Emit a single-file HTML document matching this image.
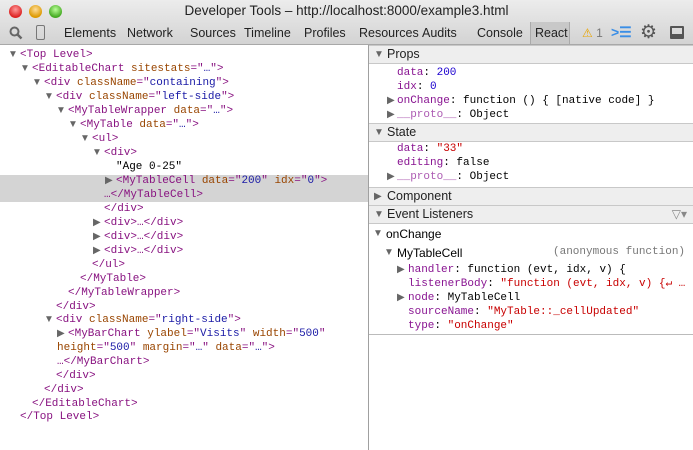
<!DOCTYPE html>
<html><head><meta charset="utf-8"><style>
*{margin:0;padding:0;box-sizing:border-box}
body{width:693px;height:450px;overflow:hidden;background:#fff;font-family:"Liberation Sans",sans-serif;position:relative}
#top{position:absolute;left:0;top:0;width:693px;height:45px;background:linear-gradient(#ececec,#d3d3d3);border-bottom:1px solid #a8a8a8}
.title{position:absolute;top:3px;left:0;width:693px;text-align:center;font-size:13.5px;color:#222}
.dot{position:absolute;top:5px;width:13px;height:13px;border-radius:50%}
.tabs{position:absolute;top:26px;font-size:12.5px;color:#222;white-space:nowrap}
.tabs span{position:absolute}
.m{font-family:"Liberation Mono",monospace;font-size:11px;white-space:pre;position:absolute;line-height:14px}
.t{color:#881280}.a{color:#994500}.v{color:#1a1aa6}.k{color:#881391}.r{color:#c80000}.s{color:#c41a16}.n{color:#1c00cf}
.ar{position:absolute;font-size:10px;color:#666;line-height:14px}
.hdr{position:absolute;left:369px;width:324px;height:19px;background:#eee;border-top:1px solid #c8c8c8;border-bottom:1px solid #c8c8c8;font-size:12.5px;color:#222;padding-left:18px;line-height:17px}
.hdr i{position:absolute;left:5px;font-style:normal;font-size:10px;color:#666}
</style></head><body>
<div id="top">
<div class="dot" style="left:9px;background:radial-gradient(circle at 50% 35%,#f99,#d22 70%)"></div>
<div class="dot" style="left:29px;background:radial-gradient(circle at 50% 35%,#fd9,#d90 70%)"></div>
<div class="dot" style="left:49px;background:radial-gradient(circle at 50% 35%,#bf9,#4a2 70%)"></div>
<div class="title">Developer Tools – http://localhost:8000/example3.html</div>
<svg style="position:absolute;left:9px;top:26px" width="14" height="14"><circle cx="5.5" cy="5.5" r="4" fill="none" stroke="#666" stroke-width="2"/><line x1="8.5" y1="8.5" x2="12.5" y2="12.5" stroke="#666" stroke-width="2.5"/></svg>
<div style="position:absolute;left:36px;top:25px;width:9px;height:15px;border:1px solid #777;border-radius:2px"></div>
<div class="tabs">
<span style="left:64px">Elements</span><span style="left:127px">Network</span><span style="left:190px">Sources</span><span style="left:244px">Timeline</span><span style="left:304px">Profiles</span><span style="left:359px">Resources</span><span style="left:422px">Audits</span><span style="left:477px">Console</span>
</div>
<div style="position:absolute;left:530px;top:22px;width:40px;height:22px;background:#c8c8c8;border-left:1px solid #aaa;border-right:1px solid #aaa"></div>
<div class="tabs"><span style="left:535px">React</span></div>
<div style="position:absolute;left:582px;top:26px;font-size:12px;color:#e9a400">⚠<span style="color:#777"> 1</span></div>
<div style="position:absolute;left:611px;top:24px;font-size:14px;color:#3a8ee6;font-weight:bold">&gt;☰</div>
<div style="position:absolute;left:640px;top:21px;font-size:19px;color:#555">⚙</div>
<div style="position:absolute;left:670px;top:26px;width:14px;height:13px;border:2px solid #555;border-bottom-width:5px;border-radius:1px"></div>
</div>

<div style="position:absolute;left:0;top:175px;width:368px;height:27px;background:#d4d4d4"></div>
<div style="position:absolute;left:368px;top:45px;width:1px;height:405px;background:#a0a0a0"></div>

<span class="ar" style="left:8px;top:48px">▼</span><span class="m" style="left:20px;top:48px"><span class="t">&lt;Top Level&gt;</span></span>
<span class="ar" style="left:20px;top:62px">▼</span><span class="m" style="left:32px;top:62px"><span class="t">&lt;EditableChart </span><span class="a">sitestats</span><span class="t">="</span><span class="v">…</span><span class="t">"&gt;</span></span>
<span class="ar" style="left:32px;top:76px">▼</span><span class="m" style="left:44px;top:76px"><span class="t">&lt;div </span><span class="a">className</span><span class="t">="</span><span class="v">containing</span><span class="t">"&gt;</span></span>
<span class="ar" style="left:44px;top:90px">▼</span><span class="m" style="left:56px;top:90px"><span class="t">&lt;div </span><span class="a">className</span><span class="t">="</span><span class="v">left-side</span><span class="t">"&gt;</span></span>
<span class="ar" style="left:56px;top:104px">▼</span><span class="m" style="left:68px;top:104px"><span class="t">&lt;MyTableWrapper </span><span class="a">data</span><span class="t">="</span><span class="v">…</span><span class="t">"&gt;</span></span>
<span class="ar" style="left:68px;top:118px">▼</span><span class="m" style="left:80px;top:118px"><span class="t">&lt;MyTable </span><span class="a">data</span><span class="t">="</span><span class="v">…</span><span class="t">"&gt;</span></span>
<span class="ar" style="left:80px;top:132px">▼</span><span class="m" style="left:92px;top:132px"><span class="t">&lt;ul&gt;</span></span>
<span class="ar" style="left:92px;top:146px">▼</span><span class="m" style="left:104px;top:146px"><span class="t">&lt;div&gt;</span></span>
<span class="m" style="left:116px;top:160px">"Age 0-25"</span>
<span class="ar" style="left:105px;top:174px">▶</span><span class="m" style="left:116px;top:174px"><span class="t">&lt;MyTableCell </span><span class="a">data</span><span class="t">="</span><span class="v">200</span><span class="t">" </span><span class="a">idx</span><span class="t">="</span><span class="v">0</span><span class="t">"&gt;</span></span>
<span class="m" style="left:104px;top:188px"><span class="t">…&lt;/MyTableCell&gt;</span></span>
<span class="m" style="left:104px;top:202px"><span class="t">&lt;/div&gt;</span></span>
<span class="ar" style="left:93px;top:216px">▶</span><span class="m" style="left:104px;top:216px"><span class="t">&lt;div&gt;…&lt;/div&gt;</span></span>
<span class="ar" style="left:93px;top:230px">▶</span><span class="m" style="left:104px;top:230px"><span class="t">&lt;div&gt;…&lt;/div&gt;</span></span>
<span class="ar" style="left:93px;top:244px">▶</span><span class="m" style="left:104px;top:244px"><span class="t">&lt;div&gt;…&lt;/div&gt;</span></span>
<span class="m" style="left:92px;top:258px"><span class="t">&lt;/ul&gt;</span></span>
<span class="m" style="left:80px;top:272px"><span class="t">&lt;/MyTable&gt;</span></span>
<span class="m" style="left:68px;top:286px"><span class="t">&lt;/MyTableWrapper&gt;</span></span>
<span class="m" style="left:56px;top:300px"><span class="t">&lt;/div&gt;</span></span>
<span class="ar" style="left:44px;top:313px">▼</span><span class="m" style="left:56px;top:313px"><span class="t">&lt;div </span><span class="a">className</span><span class="t">="</span><span class="v">right-side</span><span class="t">"&gt;</span></span>
<span class="ar" style="left:57px;top:327px">▶</span><span class="m" style="left:68px;top:327px"><span class="t">&lt;MyBarChart </span><span class="a">ylabel</span><span class="t">="</span><span class="v">Visits</span><span class="t">" </span><span class="a">width</span><span class="t">="</span><span class="v">500</span><span class="t">"</span></span>
<span class="m" style="left:57px;top:341px"><span class="a">height</span><span class="t">="</span><span class="v">500</span><span class="t">" </span><span class="a">margin</span><span class="t">="</span><span class="v">…</span><span class="t">" </span><span class="a">data</span><span class="t">="</span><span class="v">…</span><span class="t">"&gt;</span></span>
<span class="m" style="left:57px;top:355px"><span class="t">…&lt;/MyBarChart&gt;</span></span>
<span class="m" style="left:56px;top:369px"><span class="t">&lt;/div&gt;</span></span>
<span class="m" style="left:44px;top:383px"><span class="t">&lt;/div&gt;</span></span>
<span class="m" style="left:32px;top:397px"><span class="t">&lt;/EditableChart&gt;</span></span>
<span class="m" style="left:20px;top:410px"><span class="t">&lt;/Top Level&gt;</span></span>

<div class="hdr" style="top:45px"><i>▼</i>Props</div>
<span class="m" style="left:397px;top:66px"><span class="k">data</span>: <span class="n">200</span></span>
<span class="m" style="left:397px;top:80px"><span class="k">idx</span>: <span class="n">0</span></span>
<span class="ar" style="left:387px;top:94px">▶</span><span class="m" style="left:397px;top:94px"><span class="k">onChange</span>: function () { [native code] }</span>
<span class="ar" style="left:387px;top:108px">▶</span><span class="m" style="left:397px;top:108px"><span class="k" style="opacity:.7">__proto__</span>: Object</span>
<div class="hdr" style="top:123px"><i>▼</i>State</div>
<span class="m" style="left:397px;top:142px"><span class="k">data</span>: <span class="r">"33"</span></span>
<span class="m" style="left:397px;top:156px"><span class="k">editing</span>: false</span>
<span class="ar" style="left:387px;top:170px">▶</span><span class="m" style="left:397px;top:170px"><span class="k" style="opacity:.7">__proto__</span>: Object</span>
<div class="hdr" style="top:187px"><i>▶</i>Component</div>
<div class="hdr" style="top:205px"><i>▼</i>Event Listeners<span style="position:absolute;right:6px;top:0;color:#888;font-size:12px">▽▾</span></div>
<span class="ar" style="left:373px;top:227px">▼</span><span class="m" style="left:386px;top:227px;font-family:'Liberation Sans',sans-serif;font-size:12px">onChange</span>
<span class="ar" style="left:384px;top:246px">▼</span><span class="m" style="left:397px;top:246px;font-family:'Liberation Sans',sans-serif;font-size:12px">MyTableCell</span>
<span class="m" style="left:553px;top:245px;color:#777">(anonymous function)</span>
<span class="ar" style="left:397px;top:263px">▶</span><span class="m" style="left:408px;top:263px"><span class="k">handler</span>: function (evt, idx, v) {</span>
<span class="m" style="left:408px;top:277px"><span class="k">listenerBody</span>: <span class="r">"function (evt, idx, v) {↵ …</span></span>
<span class="ar" style="left:397px;top:291px">▶</span><span class="m" style="left:408px;top:291px"><span class="k">node</span>: MyTableCell</span>
<span class="m" style="left:408px;top:305px"><span class="k">sourceName</span>: <span class="r">"MyTable::_cellUpdated"</span></span>
<span class="m" style="left:408px;top:319px"><span class="k">type</span>: <span class="r">"onChange"</span></span>
<div style="position:absolute;left:369px;top:334px;width:324px;height:1px;background:#bbb"></div>
</body></html>
